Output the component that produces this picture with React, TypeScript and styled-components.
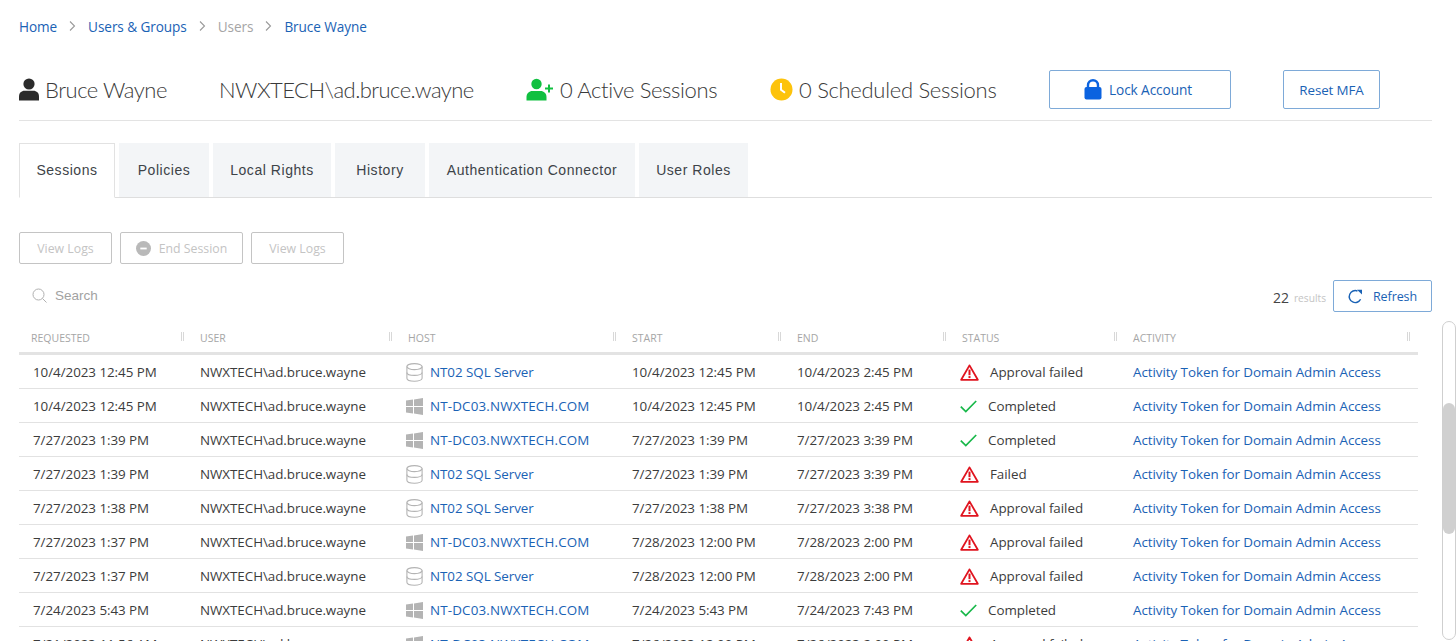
import React from "react";
import styled, { createGlobalStyle } from "styled-components";

const Global = createGlobalStyle`
  html, body { margin: 0; padding: 0; height: 641px; overflow: hidden; background: #fff; }
  body { font-family: "Open Sans", "Liberation Sans", sans-serif; color: #333; }
  * { box-sizing: border-box; }
`;

const BLUE = "#1a62b5";
const BODY = `"Open Sans", "Noto Sans", sans-serif`;

const Page = styled.div`
  width: 1456px;
  height: 641px;
  overflow: hidden;
  padding: 0 0 0 19px;
`;

const Breadcrumbs = styled.nav`
  display: flex;
  align-items: center;
  height: 20px;
  margin-top: 16px;
  font-size: 13.6px;
  letter-spacing: -0.08px;
`;
const Crumb = styled.span<{ $muted?: boolean }>`
  color: ${(p) => (p.$muted ? "#a5a5a5" : BLUE)};
`;
const CrumbSep = styled.svg`
  width: 7px;
  height: 10px;
  margin: 0 12px 0 12px;
  fill: none;
  stroke: #9a9a9a;
  stroke-width: 1.1;
`;

const Header = styled.header`
  display: flex;
  align-items: center;
  width: 1413px;
  height: 85px;
  border-bottom: 1px solid #e3e3e3;
  padding-top: 23px;
`;
const HeaderItem = styled.div<{ $w: number; $track: number }>`
  display: flex;
  align-items: center;
  width: ${(p) => p.$w}px;
  flex: none;
  font-family: Lato, "Open Sans", sans-serif;
  font-weight: 300;
  font-size: 22px;
  letter-spacing: ${(p) => p.$track}px;
  color: #3a3a3a;
  white-space: nowrap;
`;
const IconSlot = styled.span<{ $w: number }>`
  display: inline-flex;
  width: ${(p) => p.$w}px;
  flex: none;
`;
const OutlineButton = styled.button<{ $w: number }>`
  display: flex;
  align-items: center;
  justify-content: center;
  gap: 7px;
  width: ${(p) => p.$w}px;
  height: 39px;
  flex: none;
  background: #fff;
  border: 1px solid #7eaad8;
  border-radius: 2px;
  color: ${BLUE};
  font-family: ${BODY};
  font-size: 13.4px;
  letter-spacing: -0.12px;
  padding: 0;
`;
const LockButton = styled(OutlineButton)`
  font-size: 13.7px;
  padding-right: 4px;
`;
const HeaderGap = styled.span<{ $w: number }>`
  width: ${(p) => p.$w}px;
  flex: none;
`;

const Tabs = styled.div`
  display: flex;
  align-items: flex-end;
  gap: 4px;
  width: 1413px;
  height: 55px;
  margin-top: 22px;
  border-bottom: 1px solid #dedede;
`;
const Tab = styled.div<{ $active?: boolean; $w: number }>`
  display: flex;
  align-items: center;
  justify-content: center;
  width: ${(p) => p.$w}px;
  height: ${(p) => (p.$active ? 55 : 54)}px;
  margin-bottom: ${(p) => (p.$active ? -1 : 0)}px;
  padding-bottom: ${(p) => (p.$active ? 2 : 0)}px;
  background: ${(p) => (p.$active ? "#fff" : "#f3f5f7")};
  border: ${(p) => (p.$active ? "1px solid #e2e2e2" : "none")};
  border-bottom: ${(p) => (p.$active ? "1px solid #fff" : "none")};
  font-family: "Liberation Sans", Arial, sans-serif;
  font-size: 14px;
  letter-spacing: 0.55px;
  color: #3d4348;
`;

const ActionBar = styled.div`
  display: flex;
  gap: 8px;
  margin-top: 34px;
`;
const GhostButton = styled.button<{ $w: number }>`
  display: flex;
  align-items: center;
  justify-content: center;
  gap: 8px;
  width: ${(p) => p.$w}px;
  height: 32px;
  background: #fff;
  border: 1px solid #c4c4c4;
  border-radius: 2px;
  color: #c4c4c4;
  font-family: ${BODY};
  font-size: 12.3px;
  padding: 0;
`;

const SearchRow = styled.div`
  display: flex;
  align-items: center;
  justify-content: space-between;
  width: 1413px;
  height: 32px;
  margin-top: 16px;
`;
const SearchBox = styled.div`
  display: flex;
  align-items: center;
  gap: 8px;
  padding-left: 13px;
  font-family: "Liberation Sans", Arial, sans-serif;
  font-size: 13.5px;
  color: #a2a2a2;
  margin-top: -2px;
`;
const ResultsGroup = styled.div`
  display: flex;
  align-items: center;
`;
const Count = styled.span`
  font-size: 14px;
  color: #444;
  margin-top: 2px;
`;
const CountLabel = styled.span`
  font-size: 10.2px;
  color: #c4c4c4;
  margin: 3px 7px 0 5px;
`;
const RefreshButton = styled(OutlineButton)`
  height: 32px;
  gap: 10px;
  font-size: 12.5px;
  letter-spacing: -0.1px;
`;

const TableArea = styled.div`
  display: flex;
  width: 1437px;
  margin-top: 9px;
`;
const Table = styled.div`
  width: 1399px;
  flex: none;
`;
const COLS = "170px 208px 224px 165px 165px 171px 296px";
const HeadRow = styled.div`
  display: grid;
  grid-template-columns: ${COLS};
  width: 1399px;
  height: 34px;
  overflow: hidden;
  border-bottom: 3px solid #e3e3e3;
  align-items: center;
`;
const HeadCell = styled.div<{ $first?: boolean; $last?: boolean }>`
  display: flex;
  align-items: center;
  justify-content: space-between;
  padding: 3px ${(p) => (p.$last ? 8 : 5)}px 0 ${(p) => (p.$first ? 12 : 11)}px;
  font-family: ${BODY};
  font-size: 10.5px;
  color: #a6a6a6;
`;
const Resizer = styled.span`
  width: 3px;
  height: 9px;
  border-left: 1px solid #d8d8d8;
  border-right: 1px solid #d8d8d8;
  margin-bottom: 3px;
`;
const Row = styled.div`
  display: grid;
  grid-template-columns: ${COLS};
  width: 1399px;
  height: 34px;
  overflow: hidden;
  border-bottom: 1px solid #e2e2e2;
  align-items: center;
`;
const Cell = styled.div<{ $first?: boolean; $lead?: number }>`
  display: flex;
  align-items: center;
  padding-left: ${(p) => (p.$first ? 14 : p.$lead ?? 11)}px;
  padding-top: 1px;
  font-family: ${BODY};
  font-size: 13.4px;
  letter-spacing: -0.05px;
  color: #3c3c3c;
  white-space: nowrap;
`;
const RowLink = styled.span<{ $track?: number }>`
  color: ${BLUE};
  letter-spacing: ${(p) => p.$track ?? -0.05}px;
`;
const CellIcon = styled.span<{ $w: number }>`
  display: inline-flex;
  align-items: center;
  width: ${(p) => p.$w}px;
  flex: none;
`;

const Scrollbar = styled.div`
  position: relative;
  width: 14px;
  height: 319px;
  flex: none;
  margin: 0 0 0 24px;
  border: 1px solid #cfcfcf;
  border-radius: 7px;
  background: #fff;
  overflow: hidden;
`;
const Thumb = styled.div`
  position: absolute;
  left: 0;
  right: 0;
  top: 81px;
  height: 131px;
  background: #d0d0d0;
  border-radius: 6px;
`;

const UserIcon = () => (
  <svg width="20" height="23" viewBox="0 0 20 23">
    <circle cx="10" cy="6" r="5.6" fill="#2b2b2b" />
    <path d="M0 22.6v-4.2C0 15 2.4 12.8 5.6 12.8h8.8c3.2 0 5.6 2.2 5.6 5.6v4.2z" fill="#2b2b2b" />
  </svg>
);
const UserPlusIcon = () => (
  <svg width="29" height="23" viewBox="0 0 29 23">
    <circle cx="10.5" cy="6" r="5.2" fill="#10c040" />
    <path d="M0.5 22.5v-3.6c0-3.6 2.6-6 6-6h8c3.4 0 6 2.4 6 6v3.6z" fill="#10c040" />
    <path d="M23 6.5v8M19 10.5h8" stroke="#10c040" strokeWidth="2" fill="none" />
  </svg>
);
const ClockIcon = () => (
  <svg width="23" height="23" viewBox="0 0 23 23">
    <circle cx="11.5" cy="11.5" r="11" fill="#fdc30c" />
    <path d="M11 5v6.7l4 3.1" stroke="#fff" strokeWidth="2" fill="none" />
  </svg>
);
const LockIcon = () => (
  <svg width="18" height="21" viewBox="0 0 18 21">
    <path d="M4 9V6.2a5 5 0 0 1 10 0V9" stroke="#0b63e0" strokeWidth="2.4" fill="none" />
    <rect x="0.5" y="8" width="17" height="12.5" rx="2" fill="#0b63e0" />
  </svg>
);
const MinusCircle = () => (
  <svg width="15" height="15" viewBox="0 0 15 15">
    <circle cx="7.5" cy="7.5" r="7.5" fill="#b9b9b9" />
    <rect x="4.3" y="6.6" width="6.4" height="1.8" fill="#fff" />
  </svg>
);
const SearchIcon = () => (
  <svg width="15" height="15" viewBox="0 0 15 15" fill="none" stroke="#b0b0b0" strokeWidth="1">
    <circle cx="6.5" cy="6.5" r="5.5" />
    <path d="M10.5 10.5l4 4" />
  </svg>
);
const RefreshIcon = () => (
  <svg width="15" height="15" viewBox="0 0 15 15" fill="none">
    <path d="M12.6 10.3A6 6 0 1 1 9.5 2" stroke="#1a62b5" strokeWidth="1.4" />
    <path d="M9 0.8h5v4.6z" fill="#1a62b5" />
  </svg>
);
const DbIcon = () => (
  <svg width="17" height="19" viewBox="0 0 17 19" fill="none" stroke="#b4b4b4" strokeWidth="1.1">
    <ellipse cx="8.5" cy="3.6" rx="7.6" ry="3" />
    <path d="M0.9 3.6v11.6c0 1.7 3.4 3 7.6 3s7.6-1.3 7.6-3V3.6" />
    <path d="M0.9 9.4c0 1.7 3.4 3 7.6 3s7.6-1.3 7.6-3" />
  </svg>
);
const WindowsIcon = () => (
  <svg width="17" height="17" viewBox="0 0 17 17" fill="#b4b4b4">
    <path d="M0 2.6l7-1v6.5H0zM8 1.4L17 0v8.1H8zM0 9h7v6.5l-7-1zM8 9h9v8l-9-1.4z" />
  </svg>
);
const WarnIcon = () => (
  <svg width="19" height="17" viewBox="0 0 19 17">
    <path d="M9.5 1.4L1.2 15.8h16.6z" fill="#fff" stroke="#e0141f" strokeWidth="1.8" strokeLinejoin="round" />
    <rect x="8.5" y="5.6" width="2" height="5.6" fill="#e0141f" />
    <rect x="8.5" y="12.1" width="2" height="2" fill="#e0141f" />
  </svg>
);
const CheckIcon = () => (
  <svg width="17" height="13" viewBox="0 0 17 13" fill="none" stroke="#18b84a" strokeWidth="1.7">
    <path d="M0.8 6.6l5 5L16.2 1" />
  </svg>
);
const Chevron = () => (
  <CrumbSep viewBox="0 0 7 10">
    <path d="M1 0.5l4.5 4.5L1 9.5" />
  </CrumbSep>
);

type Host = "sql" | "dc";
type Status = "Approval failed" | "Completed" | "Failed";
const SQL = "NT02 SQL Server";
const DC = "NT-DC03.NWXTECH.COM";
const rows: [string, Host, string, string, Status][] = [
  ["10/4/2023 12:45 PM", "sql", "10/4/2023 12:45 PM", "10/4/2023 2:45 PM", "Approval failed"],
  ["10/4/2023 12:45 PM", "dc", "10/4/2023 12:45 PM", "10/4/2023 2:45 PM", "Completed"],
  ["7/27/2023 1:39 PM", "dc", "7/27/2023 1:39 PM", "7/27/2023 3:39 PM", "Completed"],
  ["7/27/2023 1:39 PM", "sql", "7/27/2023 1:39 PM", "7/27/2023 3:39 PM", "Failed"],
  ["7/27/2023 1:38 PM", "sql", "7/27/2023 1:38 PM", "7/27/2023 3:38 PM", "Approval failed"],
  ["7/27/2023 1:37 PM", "dc", "7/28/2023 12:00 PM", "7/28/2023 2:00 PM", "Approval failed"],
  ["7/27/2023 1:37 PM", "sql", "7/28/2023 12:00 PM", "7/28/2023 2:00 PM", "Approval failed"],
  ["7/24/2023 5:43 PM", "dc", "7/24/2023 5:43 PM", "7/24/2023 7:43 PM", "Completed"],
  ["7/21/2023 11:56 AM", "dc", "7/26/2023 12:00 PM", "7/26/2023 2:00 PM", "Approval failed"],
];
const heads = ["REQUESTED", "USER", "HOST", "START", "END", "STATUS", "ACTIVITY"];
const tabs: [string, number][] = [
  ["Sessions", 96],
  ["Policies", 90],
  ["Local Rights", 118],
  ["History", 90],
  ["Authentication Connector", 206],
  ["User Roles", 109],
];

export default function App() {
  return (
    <Page>
      <Global />
      <Breadcrumbs>
        <Crumb>Home</Crumb>
        <Chevron />
        <Crumb>Users &amp; Groups</Crumb>
        <Chevron />
        <Crumb $muted>Users</Crumb>
        <Chevron />
        <Crumb>Bruce Wayne</Crumb>
      </Breadcrumbs>

      <Header>
        <HeaderItem $w={200} $track={-0.45}>
          <IconSlot $w={26}><UserIcon /></IconSlot>Bruce Wayne
        </HeaderItem>
        <HeaderItem $w={307} $track={-0.55}>NWXTECH\ad.bruce.wayne</HeaderItem>
        <HeaderItem $w={244} $track={-0.38}>
          <IconSlot $w={34}><UserPlusIcon /></IconSlot>0 Active Sessions
        </HeaderItem>
        <HeaderItem $w={279} $track={-0.3}>
          <IconSlot $w={29}><ClockIcon /></IconSlot>0 Scheduled Sessions
        </HeaderItem>
        <LockButton $w={182}><LockIcon />Lock Account</LockButton>
        <HeaderGap $w={52} />
        <OutlineButton $w={97}>Reset MFA</OutlineButton>
      </Header>

      <Tabs>
        {tabs.map(([t, w], i) => (
          <Tab key={t} $w={w} $active={i === 0}>{t}</Tab>
        ))}
      </Tabs>

      <ActionBar>
        <GhostButton $w={93}>View Logs</GhostButton>
        <GhostButton $w={123}><MinusCircle />End Session</GhostButton>
        <GhostButton $w={93}>View Logs</GhostButton>
      </ActionBar>

      <SearchRow>
        <SearchBox><SearchIcon />Search</SearchBox>
        <ResultsGroup>
          <Count>22</Count>
          <CountLabel>results</CountLabel>
          <RefreshButton $w={99}><RefreshIcon />Refresh</RefreshButton>
        </ResultsGroup>
      </SearchRow>

      <TableArea>
        <Table>
          <HeadRow>
            {heads.map((h, i) => (
              <HeadCell key={h} $first={i === 0} $last={i === heads.length - 1}>{h}<Resizer /></HeadCell>
            ))}
          </HeadRow>
          {rows.map((r, i) => (
            <Row key={i}>
              <Cell $first>{r[0]}</Cell>
              <Cell>NWXTECH\ad.bruce.wayne</Cell>
              <Cell $lead={9}>
                <CellIcon $w={24}>{r[1] === "sql" ? <DbIcon /> : <WindowsIcon />}</CellIcon>
                <RowLink $track={r[1] === "sql" ? -0.05 : 0.16}>{r[1] === "sql" ? SQL : DC}</RowLink>
              </Cell>
              <Cell>{r[2]}</Cell>
              <Cell>{r[3]}</Cell>
              <Cell $lead={9}>
                <CellIcon $w={r[4] === "Completed" ? 28 : 30}>
                  {r[4] === "Completed" ? <CheckIcon /> : <WarnIcon />}
                </CellIcon>
                {r[4]}
              </Cell>
              <Cell><RowLink>Activity Token for Domain Admin Access</RowLink></Cell>
            </Row>
          ))}
        </Table>
        <Scrollbar><Thumb /></Scrollbar>
      </TableArea>
    </Page>
  );
}
